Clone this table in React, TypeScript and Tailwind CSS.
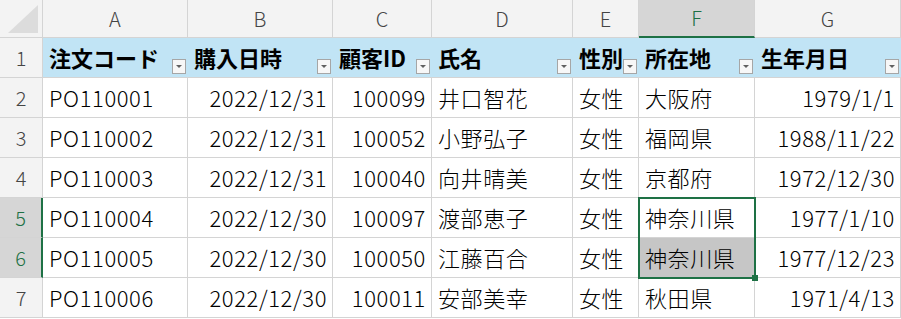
const font = { fontFamily: '"Noto Sans CJK JP", "Noto Sans", sans-serif' }

type Col = { letter: string; title: string; width: string; align: 'left' | 'right' }

const columns: Col[] = [
  { letter: 'A', title: '注文コード', width: 'w-[145px]', align: 'left' },
  { letter: 'B', title: '購入日時', width: 'w-[145px]', align: 'right' },
  { letter: 'C', title: '顧客ID', width: 'w-[99px]', align: 'right' },
  { letter: 'D', title: '氏名', width: 'w-[141px]', align: 'left' },
  { letter: 'E', title: '性別', width: 'w-[66px]', align: 'left' },
  { letter: 'F', title: '所在地', width: 'w-[116px]', align: 'left' },
  { letter: 'G', title: '生年月日', width: 'w-[146px]', align: 'right' },
]

const rows: string[][] = [
  ['PO110001', '2022/12/31', '100099', '井口智花', '女性', '大阪府', '1979/1/1'],
  ['PO110002', '2022/12/31', '100052', '小野弘子', '女性', '福岡県', '1988/11/22'],
  ['PO110003', '2022/12/31', '100040', '向井晴美', '女性', '京都府', '1972/12/30'],
  ['PO110004', '2022/12/30', '100097', '渡部恵子', '女性', '神奈川県', '1977/1/10'],
  ['PO110005', '2022/12/30', '100050', '江藤百合', '女性', '神奈川県', '1977/12/23'],
  ['PO110006', '2022/12/30', '100011', '安部美幸', '女性', '秋田県', '1971/4/13'],
]

function FilterButton() {
  return (
    <div className="mb-[3px] mr-[2px] flex h-[15px] w-[14px] shrink-0 items-center justify-center self-end border border-[#a6a6a6] bg-[#f7f7f7]">
      <svg width="8" height="5" viewBox="0 0 8 5">
        <path d="M1 1 L7 1 L4 4 Z" fill="#606060" />
      </svg>
    </div>
  )
}

export default function App() {
  return (
    <div className="relative h-[319px] w-[901px] overflow-hidden bg-white text-[22px] text-black" style={font}>
      {/* column letters */}
      <div className="flex h-[38px] bg-[#f3f3f3] font-light">
        <div className="flex w-[43px] shrink-0 items-end justify-end border-r border-b border-[#d4d4d4] p-[4px]">
          <svg width="30" height="28" viewBox="0 0 30 28">
            <path d="M30 0 L30 28 L0 28 Z" fill="#dcdcdc" />
          </svg>
        </div>
        {columns.map((c) =>
          c.letter === 'F' ? (
            <div
              key={c.letter}
              className={`${c.width} flex shrink-0 items-center justify-center border-r border-b-2 border-r-[#d4d4d4] border-b-[#1e7145] bg-[#d6d6d6] text-[20px] text-[#1e7145]`}
            >
              {c.letter}
            </div>
          ) : (
            <div
              key={c.letter}
              className={`${c.width} flex shrink-0 items-center justify-center border-r border-b border-[#d4d4d4] text-[20px] text-[#444]`}
            >
              {c.letter}
            </div>
          )
        )}
      </div>

      {/* table header row */}
      <div className="flex h-[40px]">
        <div className="flex w-[43px] shrink-0 items-center justify-center border-r border-b border-[#d4d4d4] bg-[#f3f3f3] text-[20px] font-light text-[#444]">
          1
        </div>
        {columns.map((c) => (
          <div
            key={c.letter}
            className={`${c.width} flex shrink-0 justify-between border-b border-[#d4d4d4] bg-[#c1e4f5] pl-[6px] font-bold`}
          >
            <span className="self-center whitespace-nowrap">{c.title}</span>
            <FilterButton />
          </div>
        ))}
      </div>

      {/* data rows */}
      {rows.map((r, i) => {
        const n = i + 2
        const selected = n === 5 || n === 6
        return (
          <div key={n} className="flex h-[40px] font-light">
            {selected ? (
              <div className="flex w-[43px] shrink-0 items-center justify-center border-r-2 border-b border-r-[#1e7145] border-b-[#d4d4d4] bg-[#d6d6d6] text-[20px] text-[#1e7145]">
                {n}
              </div>
            ) : (
              <div className="flex w-[43px] shrink-0 items-center justify-center border-r border-b border-[#d4d4d4] bg-[#f3f3f3] text-[20px] text-[#444]">
                {n}
              </div>
            )}
            {r.map((v, j) => {
              const c = columns[j]
              const filled = n === 6 && c.letter === 'F'
              return (
                <div
                  key={j}
                  className={`${c.width} flex shrink-0 items-center border-r border-b border-[#d4d4d4] whitespace-nowrap tracking-[0.6px] ${
                    c.align === 'right' ? 'justify-end pr-[5px]' : 'pl-[6px]'
                  } ${filled ? 'bg-[#c6c6c6]' : ''}`}
                >
                  {v}
                </div>
              )
            })}
          </div>
        )
      })}

      {/* selection F5:F6 */}
      <div className="pointer-events-none absolute left-[638px] top-[197px] h-[82px] w-[118px] border-2 border-[#1e7145]" />
      <div className="absolute left-[752px] top-[275px] h-[6px] w-[6px] bg-[#1e7145]" />
    </div>
  )
}
